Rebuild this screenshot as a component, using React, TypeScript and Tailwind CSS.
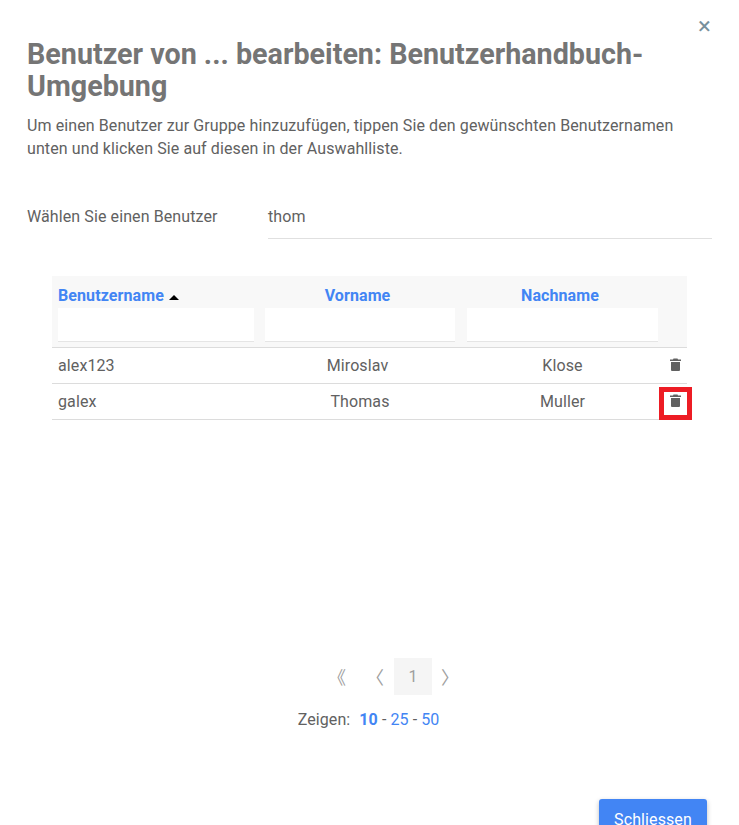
function TrashIcon() {
  return (
    <svg viewBox="0 0 11 13" className="h-[13px] w-[11px] -translate-y-px fill-[#616161]" aria-hidden>
      <path d="M3.5 0.5h4l.5 1h3v1.5H0V1.5h3zM1 4h9v8a1 1 0 0 1-1 1H2a1 1 0 0 1-1-1z" />
    </svg>
  )
}

const rows = [
  { user: 'alex123', first: 'Miroslav', last: 'Klose', firstCell: 'pr-[5px] text-center' },
  { user: 'galex', first: 'Thomas', last: 'Muller', firstCell: 'pl-[0px] text-center' },
]

export default function App() {
  return (
    <div className="relative h-[825px] w-[739px] overflow-hidden bg-white font-['Roboto',sans-serif] tracking-[0.1px] text-[#616161]">
      <div className="flex justify-end pr-[28px] pt-[15px]">
        <span className="text-[24px] leading-[22px] text-[#78909c]">×</span>
      </div>

      <div className="px-[27px] pt-[1px]">
        <h1 className="w-[680px] text-[28.7px] leading-[32px] font-bold tracking-normal text-[#757575]">
          Benutzer von ... bearbeiten: Benutzerhandbuch-Umgebung
        </h1>
        <p className="mt-[12px] w-[660px] text-[16px] leading-[23px]">
          Um einen Benutzer zur Gruppe hinzuzufügen, tippen Sie den gewünschten Benutzernamen unten und klicken Sie auf
          diesen in der Auswahlliste.
        </p>

        <div className="mt-[32px] flex items-start">
          <label className="w-[241px] pt-[13px] text-[16px] leading-[24px]">Wählen Sie einen Benutzer</label>
          <div className="h-[47px] w-[444px] border-b border-[#e0e0e0] pt-[13px] text-[16px] leading-[24px]">thom</div>
        </div>
      </div>

      <div className="mt-[37px] ml-[52px] w-[635px]">
        <div className="border-b border-[#dcdcdc] bg-[#f8f8f8] pt-[10px] pb-[5px]">
          <div className="grid grid-cols-[207px_202px_203px_23px] text-[16px] leading-[20px] font-bold text-[#4285f4]">
            <div className="flex items-center pl-[6px]">
              Benutzername
              <span className="mt-[3px] ml-[5px] h-0 w-0 border-x-[5px] border-b-[5px] border-x-transparent border-b-black" />
            </div>
            <div className="pr-[5px] text-center">Vorname</div>
            <div className="pr-[5px] text-center">Nachname</div>
            <div />
          </div>
          <div className="mt-[2px] grid grid-cols-[207px_202px_203px_23px]">
            <div className="pr-[5px] pl-[6px]">
              <div className="h-[34px] border-b border-[#e5e5e5] bg-white" />
            </div>
            <div className="pr-[6px] pl-[6px]">
              <div className="h-[34px] border-b border-[#e5e5e5] bg-white" />
            </div>
            <div className="pl-[6px]">
              <div className="h-[34px] w-[191px] border-b border-[#e5e5e5] bg-white" />
            </div>
            <div />
          </div>
        </div>

        {rows.map((r) => (
          <div
            key={r.user}
            className="grid h-[36px] grid-cols-[207px_202px_203px_23px] items-center border-b border-[#dcdcdc] text-[16px]"
          >
            <div className="pl-[6px]">{r.user}</div>
            <div className={r.firstCell}>{r.first}</div>
            <div className="text-center">{r.last}</div>
            <div className="flex justify-end pr-[6px]">
              <TrashIcon />
            </div>
          </div>
        ))}
      </div>

      {/* annotation on top of the second row */}
      <div className="absolute top-[387px] left-[659px] h-[33px] w-[33px] border-[5px] border-[#ed1c24]" />

      <div className="mt-[238px] ml-[318px] flex h-[37px] items-center text-[#9e9e9e]">
        <span className="w-[38px] -translate-y-px text-center font-['Noto_Sans_CJK_SC',sans-serif] text-[18px] leading-[24px]">《</span>
        <span className="w-[38px] -translate-y-px text-center font-['Noto_Sans_CJK_SC',sans-serif] text-[18px] leading-[24px]">〈</span>
        <span className="flex h-[37px] w-[38px] items-center justify-center bg-[#f5f5f5] text-[16px]">1</span>
        <span className="w-[36px] -translate-y-px text-center font-['Noto_Sans_CJK_SC',sans-serif] text-[18px] leading-[24px]">〉</span>
      </div>

      <div className="mt-[14px] flex justify-center pr-[2px] text-[16px] leading-[22px]">
        <span>Zeigen:</span>
        <span className="ml-[9px] font-bold text-[#4285f4]">10</span>
        <span className="mx-[4px]">-</span>
        <span className="text-[#4285f4]">25</span>
        <span className="mx-[4px]">-</span>
        <span className="text-[#4285f4]">50</span>
      </div>

      <div className="absolute top-[799px] left-[599px]">
        <button className="h-[42px] w-[108px] rounded-[3px] bg-[#4285f4] text-[16px] text-white shadow-[0_2px_5px_rgba(0,0,0,0.26)]">
          Schliessen
        </button>
      </div>
    </div>
  )
}
